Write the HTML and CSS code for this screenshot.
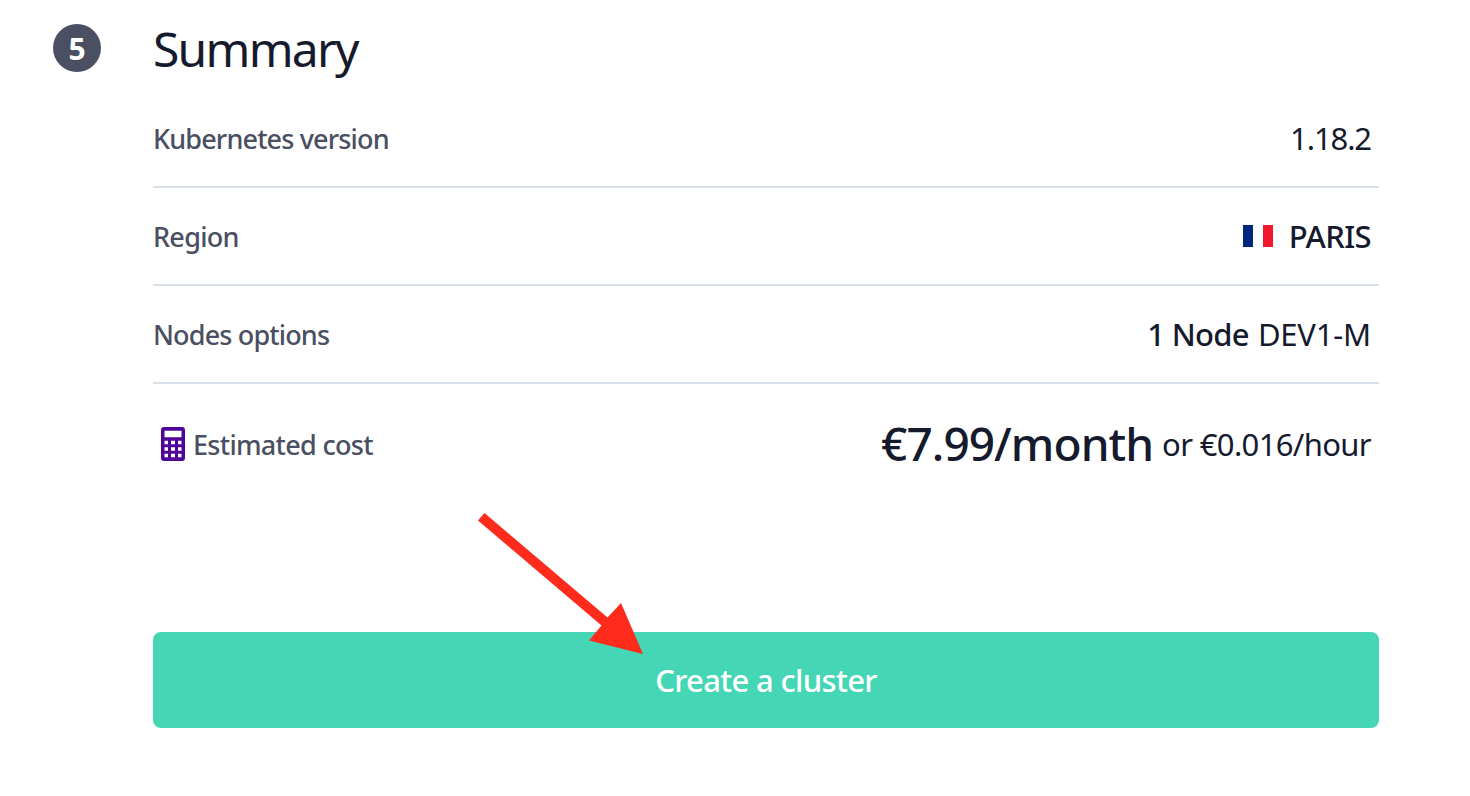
FILE: index.html
```html
<!DOCTYPE html>
<html lang="en">
<head>
<meta charset="utf-8">
<title>Create a cluster</title>
<link rel="stylesheet" href="styles.css">
</head>
<body>
<main class="step">
  <div class="badge">5</div>
  <section class="content">
    <h1 class="title">Summary</h1>
    <div class="row"><span class="label">Kubernetes version</span><span class="value version">1.18.2</span></div>
    <div class="row"><span class="label region">Region</span>
      <span class="value">
        <svg class="flag" width="30" height="22" viewBox="0 0 30 22"><path fill="#00267f" d="M0 0h10v22H0z"/><path fill="#f31830" d="M20 0h10v22H20z"/></svg>
        <span class="paris">PARIS</span>
      </span>
    </div>
    <div class="row"><span class="label">Nodes options</span><span class="value"><b class="count">1 Node</b><span class="type">DEV1-M</span></span></div>
    <div class="row cost">
      <svg class="calc" width="24" height="34" viewBox="0 0 24 34"><path fill="#4f0599" fill-rule="evenodd" d="M3 0h18a3 3 0 0 1 3 3v28a3 3 0 0 1-3 3H3a3 3 0 0 1-3-3V3a3 3 0 0 1 3-3zM3.500 3.700v6.500h17V3.700zM3.500 13.700v3.500h3.500v-3.500zM10 13.700v3.500h4v-3.500zM17 13.700v3.500h3.500v-3.500zM3.500 20.200v3.500h3.500v-3.500zM10 20.200v3.500h4v-3.500zM17 20.200v3.500h3.500v-3.500zM3.500 26.800v3.500h3.500v-3.500zM10 26.800v3.500h4v-3.500zM17 26.800v3.500h3.500v-3.500z"/></svg>
      <span class="label estimate">Estimated cost</span>
      <span class="value"><b class="month">€7.99/month</b><span class="hour">or €0.016/hour</span></span>
    </div>
    <button class="create" type="button">Create a cluster</button>
  </section>
  <svg class="arrow" width="166" height="143" viewBox="0 0 166 143"><path fill="#ff2b1c" d="M6.500 1 129.500 105.500 143 91 165 142 111 128.500 123.500 113.500 0 8.500z"/></svg>
</main>
</body>
</html>
```
FILE: styles.css
```css
* { box-sizing: border-box; }
body {
  margin: 0;
  background: #fff;
  color: #151a2d;
  font-family: "Noto Sans", "Open Sans", sans-serif;
}
.step {
  position: relative;
  display: flex;
  gap: 52px;
  height: 796px;
  padding: 24px 91px 0 53px;
}
.badge {
  flex: none;
  width: 48px;
  height: 48px;
  border-radius: 50%;
  background: #4a4f62;
  color: #fff;
  font-size: 30px;
  font-weight: 700;
  line-height: 50px;
  text-align: center;
}
.content { flex: 1; }
.title {
  height: 66px;
  margin: 0;
  font-size: 48px;
  font-weight: 400;
  line-height: 50px;
  letter-spacing: -1.75px;
}
.row {
  display: flex;
  align-items: center;
  height: 98px;
  padding-right: 8px;
  border-bottom: 2px solid #dadfec;
  white-space: nowrap;
}
.label {
  color: #4a4f62;
  font-size: 27px;
  font-weight: 500;
  letter-spacing: -0.85px;
}
.region, .estimate { letter-spacing: -0.7px; }
.value {
  display: flex;
  align-items: center;
  margin-left: auto;
  font-size: 31px;
}
.version { letter-spacing: -1.1px; }
.flag { margin-right: 16px; }
.paris { font-weight: 500; letter-spacing: -0.6px; }
.count { margin-right: 9px; font-weight: 500; letter-spacing: -0.7px; }
.type { letter-spacing: -0.2px; }
.cost { height: 120px; padding-left: 8px; border: 0; }
.calc { margin-right: 8px; }
.month {
  margin-right: 9px;
  font-size: 46px;
  font-weight: 500;
  line-height: 60px;
  padding-bottom: 2px;
  letter-spacing: -0.95px;
}
.hour { letter-spacing: -0.65px; }
.create {
  display: block;
  width: 100%;
  height: 96px;
  margin-top: 128px;
  padding: 0;
  border: 0;
  border-radius: 8px;
  background: #45d6b5;
  color: #fff;
  font: 500 31px "Noto Sans", "Open Sans", sans-serif;
  letter-spacing: -0.65px;
}
.arrow {
  position: absolute;
  left: 478px;
  top: 512px;
}
```
